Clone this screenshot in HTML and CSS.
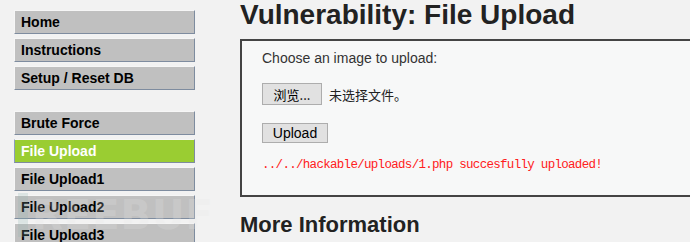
FILE: index.html
```html
<!DOCTYPE html>
<html lang="zh-CN">
<head>
<meta charset="utf-8">
<title>Vulnerability: File Upload</title>
<link rel="stylesheet" href="styles.css">
</head>
<body>
<div class="page">
  <nav class="menu">
    <ul class="menu-block">
      <li><a href="#">Home</a></li>
      <li><a href="#">Instructions</a></li>
      <li><a href="#">Setup / Reset DB</a></li>
    </ul>
    <ul class="menu-block">
      <li><a href="#">Brute Force</a></li>
      <li class="selected"><a href="#">File Upload</a></li>
      <li><a href="#">File Upload1</a></li>
      <li><a href="#">File Upload2</a></li>
      <li><a href="#">File Upload3</a></li>
    </ul>
  </nav>
  <main class="body-content">
    <h1 class="title">Vulnerability: File Upload</h1>
    <div class="code-area">
      <p class="prompt">Choose an image to upload:</p>
      <div class="file-row">
        <span class="btn btn-browse">浏览...</span>
        <span class="file-name">未选择文件。</span>
      </div>
      <div class="upload-row"><span class="btn btn-upload">Upload</span></div>
      <pre class="message">../../hackable/uploads/1.php succesfully uploaded!</pre>
    </div>
    <h2 class="subtitle">More Information</h2>
  </main>
</div>
<div class="watermark"><span class="wm-mark"></span><span class="wm-text">REEBUF</span></div>
</body>
</html>
```

FILE: styles.css
```css
html, body {
  margin: 0;
  padding: 0;
  background: #f2f2f2;
  overflow: hidden;
  height: 242px;
}
body {
  font-family: "Liberation Sans", Arial, sans-serif;
  color: #222;
  position: relative;
}
.page {
  display: flex;
  align-items: flex-start;
}
.menu {
  padding: 10px 0 0 14px;
  width: 181px;
  flex: none;
}
.menu-block {
  list-style: none;
  margin: 0 0 21px 0;
  padding: 0;
  display: flex;
  flex-direction: column;
  gap: 4px;
}
.menu-block li a {
  display: block;
  height: 22px;
  line-height: 22px;
  padding: 0 6px;
  background: #c0c0c0;
  border: 1px solid;
  border-color: #f6f6f6 #7e8c9f #7e8c9f #f6f6f6;
  font-weight: bold;
  font-size: 14px;
  color: #000;
  text-decoration: none;
  white-space: nowrap;
}
.menu-block li.selected a {
  background: #9acd32;
  color: #fff;
  border-color: #f6f6f6 #7e8c9f #7e8c9f #8c9cbf;
}
.body-content {
  margin-left: 45px;
  flex: none;
  width: 520px;
}
.title {
  margin: 0;
  padding-top: 1px;
  font-size: 28px;
  line-height: 28px;
  font-weight: bold;
  color: #222;
  white-space: nowrap;
}
.code-area {
  margin-top: 10px;
  border: 2px solid #444;
  background: #f7f8f8;
  padding: 9px 20px 23px 20px;
}
.prompt {
  margin: 0;
  font-size: 14px;
  line-height: 16px;
  color: #333;
}
.file-row {
  margin-top: 17px;
  display: flex;
  align-items: center;
  gap: 7px;
}
.btn {
  display: inline-flex;
  align-items: center;
  justify-content: center;
  box-sizing: border-box;
  background: #e1e1e1;
  border: 1px solid #adadad;
  color: #000;
}
.btn-browse {
  width: 60px;
  height: 22px;
  font-family: "Noto Sans CJK SC", "Liberation Sans", sans-serif;
  font-size: 13px;
}
.file-name {
  font-family: "Noto Sans CJK SC", sans-serif;
  font-size: 13px;
  color: #222;
}
.upload-row {
  margin-top: 18px;
  display: flex;
}
.btn-upload {
  width: 66px;
  height: 20px;
  font-size: 14px;
}
.message {
  margin: 15px 0 0 0;
  font-family: "Liberation Mono", "Courier New", monospace;
  font-size: 12.5px;
  letter-spacing: -0.7px;
  line-height: 14px;
  color: #ff2020;
}
.subtitle {
  margin: 15px 0 0 0;
  font-size: 22px;
  line-height: 26px;
  font-weight: bold;
  color: #222;
}
.watermark {
  position: absolute;
  left: 18px;
  top: 193px;
  display: flex;
  align-items: flex-start;
  gap: 4px;
  pointer-events: none;
  opacity: 0.22;
}
.wm-mark {
  width: 10px;
  height: 44px;
  background: #8fb5b0;
}
.wm-text {
  font-family: "DejaVu Sans", sans-serif;
  font-weight: bold;
  font-size: 40px;
  line-height: 44px;
  color: #e8e8e8;
  letter-spacing: 1px;
}
```
